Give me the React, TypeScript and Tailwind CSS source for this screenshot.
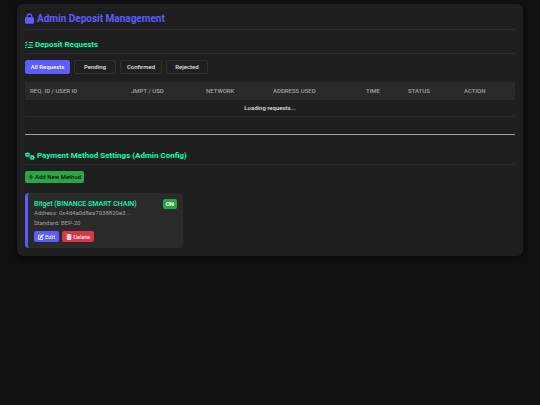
import { useState } from "react";
import { FaGears, FaListCheck, FaLock, FaPenToSquare, FaPlus, FaTrashCan } from "react-icons/fa6";

const FILTERS = ["All Requests", "Pending", "Confirmed", "Rejected"];

const COLUMNS = [
  { label: "REQ. ID / USER ID", width: "w-[101px]" },
  { label: "JMPT / USD", width: "w-[75px]" },
  { label: "NETWORK", width: "w-[67px]" },
  { label: "ADDRESS USED", width: "w-[93px]" },
  { label: "TIME", width: "w-[42px]" },
  { label: "STATUS", width: "w-[56px]" },
  { label: "ACTION", width: "w-[56px]" },
];

interface PaymentMethod {
  id: string;
  name: string;
  network: string;
  address: string;
  standard: string;
  enabled: boolean;
}

const METHODS: PaymentMethod[] = [
  {
    id: "bitget",
    name: "Bitget",
    network: "BINANCE SMART CHAIN",
    address: "0x4d4a0d8ea7038820e3",
    standard: "BEP-20",
    enabled: true,
  },
];

function MethodCard({ method }: { method: PaymentMethod }) {
  return (
    <div className="rounded-[4px] border-l-[3px] border-[#5c5cff] bg-[#2a2a2a] p-[6px]">
      <div className="flex items-center justify-between">
        <h3 className="text-[7px] leading-[10px] font-medium text-[#00ffbb]">
          {method.name} ({method.network})
        </h3>
        <span className="rounded-[2px] bg-[#28a745] px-[3px] text-[6px] leading-[10px] font-bold text-white">
          {method.enabled ? "ON" : "OFF"}
        </span>
      </div>
      <p className="text-[6px] leading-[8px] text-[#a0a0a0]">Address: {method.address}...</p>
      <p className="mt-[2px] text-[6px] leading-[8px] text-[#a0a0a0]">Standard: {method.standard}</p>
      <div className="mt-1 flex gap-[3px]">
        <button className="flex items-center gap-px rounded-[2px] bg-[#5c5cff] px-1 text-[6px] leading-[11px] text-white">
          <FaPenToSquare /> Edit
        </button>
        <button className="flex items-center gap-px rounded-[2px] bg-[#dc3545] px-1 text-[6px] leading-[11px] text-white">
          <FaTrashCan /> Delete
        </button>
      </div>
    </div>
  );
}

export default function App() {
  const [filter, setFilter] = useState(FILTERS[0]);

  return (
    <div className="min-h-screen bg-[#111111] px-[17px] py-1 font-['Roboto',sans-serif] text-[#e0e0e0]">
      <main className="rounded-[6px] bg-[#1f1f1f] p-2 shadow-[0_2px_8px_rgba(0,0,0,0.5)]">
        <h1 className="flex items-center gap-[3px] border-b border-[#2c2c2c] pb-1 text-[10px] leading-[13px] font-bold text-[#5c5cff]">
          <FaLock className="h-[11px] w-[9px]" /> Admin Deposit Management
        </h1>

        <section>
          <h2 className="mt-[10px] flex items-center gap-[2px] border-b border-[#2c2c2c] pb-[3px] text-[8px] leading-[10px] font-bold text-[#00ffbb]">
            <FaListCheck /> Deposit Requests
          </h2>
          <div className="mt-[6px] flex gap-1">
            {FILTERS.map((f) => (
              <button
                key={f}
                onClick={() => setFilter(f)}
                className={
                  f === filter
                    ? "w-[45px] rounded-[2px] border border-[#5c5cff] bg-[#5c5cff] text-[6px] leading-[12px] font-medium text-white"
                    : "w-[42px] rounded-[2px] border border-[#303030] text-[6px] leading-[12px] font-medium text-[#e0e0e0]"
                }
              >
                {f}
              </button>
            ))}
          </div>

          <table className="mt-2 w-full table-fixed border-collapse">
            <colgroup>
              {COLUMNS.map((c) => (
                <col key={c.label} className={c.width} />
              ))}
            </colgroup>
            <thead className="bg-[#2a2a2a]">
              <tr>
                {COLUMNS.map((c) => (
                  <th
                    key={c.label}
                    className="px-[5px] py-1 text-left text-[6px] leading-[10px] font-medium whitespace-nowrap text-[#a0a0a0]"
                  >
                    {c.label}
                  </th>
                ))}
              </tr>
            </thead>
            <tbody>
              <tr className="border-b border-[#2c2c2c]">
                <td colSpan={COLUMNS.length} className="py-[3px] text-center text-[6px] leading-[10px] font-medium">
                  Loading requests...
                </td>
              </tr>
            </tbody>
          </table>
        </section>

        <hr className="mt-[17px] border-[#a0a0a0]" />

        <section>
          <h2 className="mt-4 flex items-center gap-[2px] border-b border-[#2c2c2c] pb-[3px] text-[8px] leading-[10px] font-bold text-[#00ffbb]">
            <FaGears className="text-[10px]" /> Payment Method Settings (Admin Config)
          </h2>
          <button className="mt-[6px] flex items-center gap-px rounded-[2px] bg-[#28a745] px-[3px] text-[6px] leading-[12px] font-medium text-[#111111]">
            <FaPlus /> Add New Method
          </button>
          <div className="mt-[10px] grid grid-cols-3 gap-2">
            {METHODS.map((m) => (
              <MethodCard key={m.id} method={m} />
            ))}
          </div>
        </section>
      </main>
    </div>
  );
}
